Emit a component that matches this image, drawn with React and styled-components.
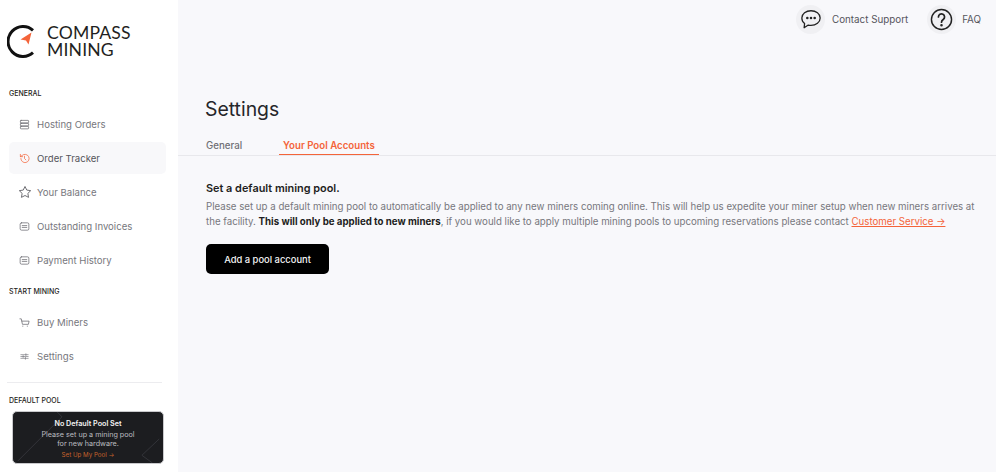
import React from "react";
import styled, { createGlobalStyle } from "styled-components";

const GlobalStyle = createGlobalStyle`
  html, body {
    margin: 0;
    padding: 0;
    height: 472px;
    overflow: hidden;
    background: #f8f8fb;
    font-family: Inter, "Liberation Sans", sans-serif;
  }
`;

const Page = styled.div`
  display: flex;
  width: 996px;
  height: 472px;
  overflow: hidden;
  opacity: 0.999;
`;

const Sidebar = styled.aside`
  width: 178px;
  flex: none;
  background: #fff;
  box-sizing: border-box;
  padding: 24px 12px 0 9px;
  display: flex;
  flex-direction: column;
`;

const LogoRow = styled.div`
  display: flex;
  align-items: center;
  gap: 12px;
  margin-left: -2px;
  height: 34px;
`;

const LogoText = styled.div`
  font-family: "Lato", "Open Sans", sans-serif;
  font-size: 17.6px;
  line-height: 17px;
  letter-spacing: 0.15px;
  color: #1f1f22;
`;

const SectionLabel = styled.div`
  font-size: 7px;
  line-height: 10px;
  font-weight: 500;
  color: #1d1d20;
  height: 10px;
  margin-top: ${(p) => p.$top}px;
  margin-bottom: ${(p) => p.$bottom}px;
`;

const NavList = styled.nav`
  display: flex;
  flex-direction: column;
  gap: 2px;
`;

const NavItem = styled.a`
  display: flex;
  align-items: center;
  height: 32px;
  padding-left: 10px;
  gap: 7px;
  border-radius: 5px;
  font-size: 9.6px;
  color: ${(p) => (p.$active ? "#55555b" : "#77777d")};
  background: ${(p) => (p.$active ? "#f8f8fa" : "transparent")};

  svg {
    width: 11px;
    height: 11px;
    flex: none;
    color: ${(p) => (p.$active ? "#f4643a" : "#66666c")};
  }
`;

const StarSvg = styled.svg`
  && {
    width: 14px;
    height: 14px;
    margin: 0 -2px 0 -1px;
  }
`;

const Divider = styled.hr`
  border: 0;
  border-top: 1px solid #ececef;
  margin: 10px 4px 0 -2px;
  width: 155px;
`;

const PoolCard = styled.div`
  position: relative;
  overflow: hidden;
  width: 152px;
  height: 53px;
  margin-left: 3px;
  box-sizing: border-box;
  padding-top: 7px;
  background: #1c1d20;
  border: 1px solid #c9c9cc;
  border-radius: 5px;
  text-align: center;
  font-size: 7.2px;
  line-height: 9px;
  color: #bdbdc0;
`;

const PoolLines = styled.svg`
  position: absolute;
  inset: 0;
  width: 100%;
  height: 100%;
`;

const PoolText = styled.div`
  position: relative;
`;

const PoolTitle = styled.div`
  color: #f4f4f4;
  font-weight: 600;
  line-height: 10px;
  margin-bottom: 1px;
`;

const PoolLink = styled.div`
  color: #c4622c;
  font-size: 6.2px;
  margin-top: 2px;
`;

const Main = styled.main`
  flex: 1;
  min-width: 0;
  display: flex;
  flex-direction: column;
  background: #f8f8fb;
`;

const TopBar = styled.header`
  display: flex;
  justify-content: flex-end;
  align-items: center;
  height: 38px;
  padding-right: 15px;
  gap: 19px;
`;

const TopLink = styled.a`
  display: flex;
  align-items: center;
  gap: ${(p) => p.$gap}px;
  font-size: 9.8px;
  color: #55555b;
`;

const IconCircle = styled.span`
  display: flex;
  align-items: center;
  justify-content: center;
  width: 29px;
  height: 29px;
  border-radius: 50%;
  background: #f0f0f3;
  color: #222;
`;

const Title = styled.h1`
  margin: 57px 0 0 27px;
  font-size: 19.4px;
  line-height: 28px;
  font-weight: 400;
  color: #26262a;
`;

const Tabs = styled.div`
  display: flex;
  margin-top: 13px;
  padding-left: 28px;
  height: 20px;
  box-sizing: border-box;
  border-bottom: 1px solid #e8e8ec;
`;

const Tab = styled.div`
  height: 19px;
  box-sizing: border-box;
  padding: 0 ${(p) => (p.$active ? "4px" : "0")};
  margin-left: ${(p) => (p.$active ? "37px" : "0")};
  font-size: 9.7px;
  line-height: 20px;
  font-weight: ${(p) => (p.$active ? 600 : 500)};
  color: ${(p) => (p.$active ? "#f4643a" : "#6f6f75")};
  border-bottom: ${(p) => (p.$active ? "1px solid #f4643a" : "0")};
`;

const Content = styled.section`
  padding: 24px 20px 0 28px;
`;

const Heading = styled.h2`
  margin: 0;
  font-size: 10.9px;
  line-height: 16px;
  font-weight: 600;
  color: #1e1e22;
`;

const Body = styled.p`
  margin: 4px 0 0;
  font-size: 9.7px;
  line-height: 14.5px;
  color: #77777d;

  strong {
    font-weight: 700;
    color: #1e1e22;
  }
`;

const OrangeLink = styled.a`
  color: #f4643a;
  text-decoration: underline;
`;

const PrimaryButton = styled.button`
  display: block;
  margin-top: 15px;
  width: 123px;
  height: 30px;
  border: 0;
  border-radius: 5px;
  background: #000;
  color: #f5f5f5;
  font-family: inherit;
  font-size: 9.4px;
  font-weight: 500;
`;

const Stroke = ({ children, width = 1.6 }) => (
  <svg viewBox="0 0 24 24" fill="none" stroke="currentColor" strokeWidth={width} strokeLinecap="round" strokeLinejoin="round">
    {children}
  </svg>
);

const StackIcon = () => (
  <Stroke>
    <rect x="3" y="3" width="18" height="5.5" rx="1.5" />
    <rect x="3" y="9.5" width="18" height="5.5" rx="1.5" />
    <rect x="3" y="16" width="18" height="5.5" rx="1.5" />
  </Stroke>
);
const HistoryIcon = () => (
  <Stroke>
    <path d="M4 12a9 9 0 1 0 3-6.7L3 8" />
    <path d="M3 3v5h5" />
    <path d="M12 7v5l3 3" />
  </Stroke>
);
const StarIcon = () => (
  <StarSvg viewBox="0 0 24 24" fill="none" stroke="currentColor" strokeWidth="1.6" strokeLinejoin="round">
    <path d="M12 2.5l3 6.2 6.8 1-4.9 4.7 1.2 6.8-6.1-3.2-6.1 3.2 1.2-6.8-4.9-4.7 6.8-1z" />
  </StarSvg>
);
const InvoiceIcon = () => (
  <Stroke>
    <rect x="2.5" y="4" width="19" height="16" rx="3" />
    <path d="M7 10h10M7 14h10" />
  </Stroke>
);
const CartIcon = () => (
  <Stroke>
    <path d="M2 4h3l1 5h16l-1.5 7H7.5L6 9" />
    <path d="M8 20h.5M18 20h.5" />
  </Stroke>
);
const SlidersIcon = () => (
  <Stroke width={1.3}>
    <path d="M4 8h16M4 12h16M4 16h16" />
    <path d="M15 6v4M9 10v4M14 14v4" />
  </Stroke>
);

const LogoMark = () => (
  <svg width="28" height="33" viewBox="0 0 28 33">
    <path d="M26 5.300A15 15 0 1 0 26 27.700" fill="none" stroke="#111" strokeWidth="3" />
    <path d="M24.500 7.500 L13.500 14.500 L19 15.500 L21.500 19.500 Z" fill="#f4643a" />
  </svg>
);

const generalItems = [
  { label: "Hosting Orders", icon: <StackIcon /> },
  { label: "Order Tracker", icon: <HistoryIcon />, active: true },
  { label: "Your Balance", icon: <StarIcon /> },
  { label: "Outstanding Invoices", icon: <InvoiceIcon /> },
  { label: "Payment History", icon: <InvoiceIcon /> }
];

const miningItems = [
  { label: "Buy Miners", icon: <CartIcon /> },
  { label: "Settings", icon: <SlidersIcon /> }
];

const renderItems = items =>
  items.map(item => (
    <NavItem key={item.label} $active={item.active}>
      {item.icon}
      {item.label}
    </NavItem>
  ));

const App = () => (
  <Page>
    <GlobalStyle />
    <Sidebar>
      <LogoRow>
        <LogoMark />
        <LogoText>
          COMPASS
          <br />
          MINING
        </LogoText>
      </LogoRow>
      <SectionLabel $top={31} $bottom={9}>GENERAL</SectionLabel>
      <NavList>{renderItems(generalItems)}</NavList>
      <SectionLabel $top={11} $bottom={9}>START MINING</SectionLabel>
      <NavList>{renderItems(miningItems)}</NavList>
      <Divider />
      <SectionLabel $top={13} $bottom={5}>DEFAULT POOL</SectionLabel>
      <PoolCard>
        <PoolLines viewBox="0 0 152 53" fill="none" stroke="#34353a" strokeWidth="1">
          <path d="M3 51L49 5l-6-6" />
          <path d="M150 28l-18 17 11 8" />
        </PoolLines>
        <PoolText>
          <PoolTitle>No Default Pool Set</PoolTitle>
          Please set up a mining pool
          <br />
          for new hardware.
          <PoolLink>Set Up My Pool →</PoolLink>
        </PoolText>
      </PoolCard>
    </Sidebar>
    <Main>
      <TopBar>
        <TopLink $gap={7}>
          <IconCircle>
            <svg width="22" height="22" viewBox="0 0 24 24" fill="none" stroke="currentColor" strokeWidth="1.4" strokeLinejoin="round">
              <path d="M12 3c5.500 0 10 3.500 10 8s-4.500 8-10 8c-1 0-2-.1-3-.4L4.500 21.500l.5-4.500C3 15.500 2 13.500 2 11c0-4.500 4.500-8 10-8z" />
              <circle cx="8" cy="11" r=".7" fill="currentColor" />
              <circle cx="12" cy="11" r=".7" fill="currentColor" />
              <circle cx="16" cy="11" r=".7" fill="currentColor" />
            </svg>
          </IconCircle>
          Contact Support
        </TopLink>
        <TopLink $gap={6}>
          <IconCircle>
            <svg width="23" height="23" viewBox="0 0 24 24" fill="none" stroke="currentColor" strokeWidth="1.5" strokeLinecap="round">
              <circle cx="12" cy="12" r="10.500" />
              <path d="M8.800 9.300a3.200 3.200 0 1 1 5 2.700c-1.100.8-1.800 1.400-1.800 2.800" strokeWidth="1.800" />
              <circle cx="12" cy="18" r=".6" fill="currentColor" />
            </svg>
          </IconCircle>
          FAQ
        </TopLink>
      </TopBar>
      <Title>Settings</Title>
      <Tabs>
        <Tab>General</Tab>
        <Tab $active>Your Pool Accounts</Tab>
      </Tabs>
      <Content>
        <Heading>Set a default mining pool.</Heading>
        <Body>
          Please set up a default mining pool to automatically be applied to any new miners coming online. This will help us expedite your miner setup when new miners arrives at the facility. <strong>This will only be applied to new miners</strong>, if you would like to apply multiple mining pools to upcoming reservations please contact <OrangeLink>Customer Service →</OrangeLink>
        </Body>
        <PrimaryButton>Add a pool account</PrimaryButton>
      </Content>
    </Main>
  </Page>
);

export default App;
